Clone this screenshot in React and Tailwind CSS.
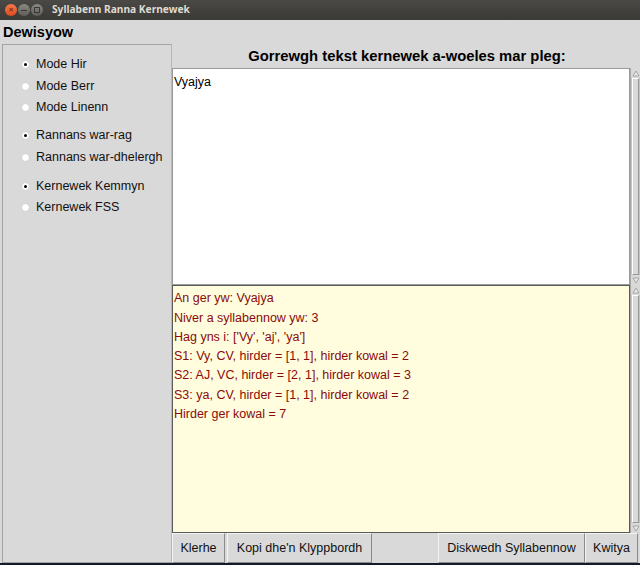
import React from "react";

const font = { fontFamily: '"Liberation Sans", Arial, sans-serif' };

function Radio({ checked, label }) {
  return (
    <div className="flex items-center h-[21.5px]">
      <div className="w-[18px] shrink-0" />
      <div className="w-[9px] h-[9px] shrink-0 rounded-full bg-white border border-[#d0d0d0] flex items-center justify-center">
        {checked && <div className="w-[3px] h-[3px] rounded-full bg-black" />}
      </div>
      <div className="w-[6px] shrink-0" />
      <span className="text-[12.5px] text-[#111] whitespace-nowrap">{label}</span>
    </div>
  );
}

function Scrollbar() {
  return (
    <div className="w-[10px] h-full bg-[#c4c4c4] flex flex-col border-l border-[#a8a8a8]">
      <div className="h-[10px] bg-[#d9d9d9] flex items-center justify-center">
        <svg width="8" height="7" viewBox="0 0 8 7"><path d="M4 1 L7 6 L1 6 Z" fill="#e8e8e8" stroke="#999" strokeWidth="0.8" /></svg>
      </div>
      <div className="flex-1 mx-[1px] bg-[#d9d9d9] border border-t-white border-l-white border-r-[#999] border-b-[#999]" />
      <div className="h-[10px] bg-[#d9d9d9] flex items-center justify-center">
        <svg width="8" height="7" viewBox="0 0 8 7"><path d="M4 6 L7 1 L1 1 Z" fill="#e8e8e8" stroke="#999" strokeWidth="0.8" /></svg>
      </div>
    </div>
  );
}

function Btn({ children, className = "" }) {
  return (
    <div className={"h-full flex items-center justify-center bg-[#d9d9d9] border border-t-[#f4f4f4] border-l-[#f4f4f4] border-r-[#8a8a8a] border-b-[#8a8a8a] text-[12.5px] text-[#111] whitespace-nowrap " + className}>
      {children}
    </div>
  );
}

export default function App() {
  const lines = [
    "An ger yw: Vyajya",
    "Niver a syllabennow yw: 3",
    "Hag yns i: ['Vy', 'aj', 'ya']",
    "S1: Vy, CV, hirder = [1, 1], hirder kowal = 2",
    "S2: AJ, VC, hirder = [2, 1], hirder kowal = 3",
    "S3: ya, CV, hirder = [1, 1], hirder kowal = 2",
    "Hirder ger kowal = 7",
  ];
  return (
    <div className="w-[640px] h-[565px] flex flex-col bg-[#1c2233] overflow-hidden" style={font}>
      {/* title bar */}
      <div className="h-[20px] bg-gradient-to-b from-[#4a4945] to-[#3a3935] flex items-center">
        <div className="w-[5px]" />
        <div className="w-[12px] h-[12px] rounded-full bg-gradient-to-b from-[#f47a4c] to-[#dc4a1a] flex items-center justify-center">
          <span className="text-[8px] leading-none text-[#7a2a10] font-bold">×</span>
        </div>
        <div className="w-[1px]" />
        <div className="w-[12px] h-[12px] rounded-full bg-gradient-to-b from-[#8a8984] to-[#5e5d59] flex items-center justify-center">
          <div className="w-[6px] h-[1px] bg-[#3a3935]" />
        </div>
        <div className="w-[1px]" />
        <div className="w-[12px] h-[12px] rounded-full bg-gradient-to-b from-[#8a8984] to-[#5e5d59] flex items-center justify-center">
          <div className="w-[6px] h-[6px] border border-[#3a3935]" />
        </div>
        <span className="ml-[9px] text-[10.2px] font-bold text-[#dfdbd2]" style={{ fontFamily: '"Noto Sans", "Open Sans", sans-serif' }}>
          Syllabenn Ranna Kernewek
        </span>
      </div>
      {/* main */}
      <div className="h-[543px] bg-[#d9d9d9] flex flex-col">
        <div className="h-[24px] flex items-center pl-[3px] pt-[1px]">
          <span className="text-[14.5px] font-bold text-black">Dewisyow</span>
        </div>
        <div className="flex-1 flex">
          <div className="w-[170px] ml-[2px] border border-[#a3a3a3] border-r-[#b8b8b8] pt-[9px]">
            <Radio checked label="Mode Hir" />
            <Radio label="Mode Berr" />
            <Radio label="Mode Linenn" />
            <div className="h-[6.5px]" />
            <Radio checked label="Rannans war-rag" />
            <Radio label="Rannans war-dhelergh" />
            <div className="h-[7.5px]" />
            <Radio checked label="Kernewek Kemmyn" />
            <Radio label="Kernewek FSS" />
          </div>
          <div className="flex-1 flex flex-col">
            <div className="h-[24px] flex items-center justify-center">
              <span className="text-[14.8px] font-bold text-black ml-[2px]">Gorrewgh tekst kernewek a-woeles mar pleg:</span>
            </div>
            <div className="h-[217px] flex">
              <div className="flex-1 bg-white border border-[#9a9a9a] px-[1px] pt-[0px]">
                <span className="text-[12.5px] text-black">Vyajya</span>
              </div>
              <Scrollbar />
            </div>
            <div className="h-[248px] flex">
              <div className="flex-1 bg-[#fffddd] border border-[#5a5a5a] pl-[1px] pt-[3px] flex flex-col">
                {lines.map((l) => (
                  <div key={l} className="h-[19.3px] flex items-center text-[12.5px] text-[#8b0a0a] whitespace-nowrap">{l}</div>
                ))}
              </div>
              <Scrollbar />
            </div>
            <div className="h-[30px] flex">
              <Btn className="w-[53px]">Klerhe</Btn>
              <div className="w-[2px]" />
              <Btn className="w-[145px]">Kopi dhe'n Klyppbordh</Btn>
              <div className="flex-1" />
              <Btn className="w-[147px]">Diskwedh Syllabennow</Btn>
              <Btn className="w-[53px]">Kwitya</Btn>
              <div className="w-[2px]" />
            </div>
          </div>
        </div>
      </div>
      <div className="flex-1 bg-[#15192a]" />
    </div>
  );
}
